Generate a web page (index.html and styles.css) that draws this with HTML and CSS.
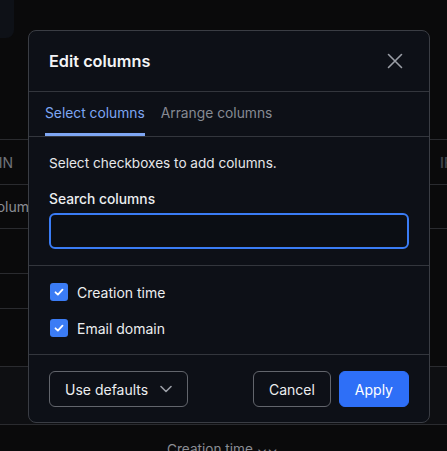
FILE: index.html
```html
<!DOCTYPE html>
<html>
<head>
<meta charset="utf-8">
<link rel="stylesheet" href="styles.css">
</head>
<body>
<div class="page">
  <div class="top"><div class="tab-stub"></div></div>
  <div class="row head-row">
    <span class="cell-l">IN</span>
    <span class="cell-r">IF</span>
  </div>
  <div class="row row2"><span class="cell-l">olum</span></div>
  <div class="row row3"></div>
  <div class="row row4"><div class="left-line"></div></div>
  <div class="row row5"><div class="left-line"></div></div>
  <div class="row row6"></div>
  <div class="row row7"><span class="cell-m">Creation time ⌄⌄</span></div>
</div>

<div class="modal">
  <div class="modal-header">
    <h2 class="title">Edit columns</h2>
    <svg class="close" width="16" height="16" viewBox="0 0 16 16"><path d="M1.5 1.5L14.5 14.5M14.5 1.5L1.5 14.5" stroke="#9a9ea6" stroke-width="1.6" stroke-linecap="round"/></svg>
  </div>
  <div class="tabs">
    <div class="tab active">Select columns</div>
    <div class="tab">Arrange columns</div>
  </div>
  <div class="modal-body">
    <p class="hint">Select checkboxes to add columns.</p>
    <label class="label">Search columns</label>
    <div class="input"></div>
  </div>
  <div class="checklist">
    <div class="check-row">
      <span class="checkbox"><svg width="12" height="12" viewBox="0 0 12 12"><path d="M2.5 6.3L4.9 8.6L9.5 3.6" fill="none" stroke="#fff" stroke-width="1.8" stroke-linecap="round" stroke-linejoin="round"/></svg></span>
      <span>Creation time</span>
    </div>
    <div class="check-row">
      <span class="checkbox"><svg width="12" height="12" viewBox="0 0 12 12"><path d="M2.5 6.3L4.9 8.6L9.5 3.6" fill="none" stroke="#fff" stroke-width="1.8" stroke-linecap="round" stroke-linejoin="round"/></svg></span>
      <span>Email domain</span>
    </div>
  </div>
  <div class="footer">
    <button class="btn btn-outline defaults">Use defaults
      <svg width="12" height="8" viewBox="0 0 12 8"><path d="M1 1.5L6 6.5L11 1.5" fill="none" stroke="#9a9ea6" stroke-width="1.6" stroke-linecap="round" stroke-linejoin="round"/></svg>
    </button>
    <div class="footer-right">
      <button class="btn btn-outline">Cancel</button>
      <button class="btn btn-primary">Apply</button>
    </div>
  </div>
</div>
</body>
</html>
```
FILE: styles.css
```css
* { box-sizing: border-box; }
html, body { margin: 0; padding: 0; }
body {
  width: 447px;
  height: 451px;
  overflow: hidden;
  background: #0a0a0b;
  font-family: Inter, "Noto Sans", sans-serif;
  color: #e8e9ec;
  position: relative;
}
.page { display: flex; flex-direction: column; }
.top { height: 139px; }
.tab-stub {
  width: 14px; height: 38px;
  background: #0e1117;
  border-radius: 0 0 8px 0;
}
.row {
  display: flex;
  align-items: center;
  justify-content: space-between;
  border-top: 1px solid #2a2b2f;
  font-size: 14px;
  color: #70737a;
}
.head-row { height: 45px; }
.row2 { height: 44px; color: #8a8d94; }
.row3 { height: 45px; }
.row4 { height: 35px; border-top: none; align-items: flex-start; }
.row5 { height: 58px; border-top: none; align-items: flex-start; }
.left-line { width: 29px; border-top: 1px solid #2a2b2f; }
.row6 { height: 58px; background: #0e0f12; }
.row7 { height: 27px; justify-content: center; align-items: flex-start; overflow: hidden; }
.cell-l { width: 29px; text-align: right; overflow: hidden; white-space: nowrap; direction: rtl; padding-right: 16px; }
.row2 .cell-l { padding-right: 0; width: 29px; }
.cell-r { width: 18px; overflow: hidden; white-space: nowrap; padding-left: 11px; color: #3f4249; font-weight: 600; }
.cell-m { color: #8a8d94; margin-top: 16px; margin-right: 2px; font-size: 13.6px; }

.modal {
  position: absolute;
  left: 28px;
  top: 30px;
  width: 402px;
  background: #0d1017;
  border: 1px solid #3a3d44;
  border-radius: 8px;
  display: flex;
  flex-direction: column;
}
.modal-header {
  display: flex;
  align-items: center;
  justify-content: space-between;
  padding: 20px 26px 20px 20px;
  border-bottom: 1px solid #33363d;
}
.title {
  margin: 0;
  font-size: 16.3px;
  line-height: 20px;
  font-weight: 600;
  color: #f3f4f6;
}
.close { display: block; }
.tabs {
  display: flex;
  gap: 16px;
  padding: 0 16px;
  border-bottom: 1px solid #33363d;
}
.tab {
  height: 44px;
  font-size: 13.8px;
  color: #868a93;
  border-bottom: 3px solid transparent;
  padding-top: 2px;
  line-height: 39px;
}
.tab.active { color: #7ea6f3; border-bottom-color: #7ea6f3; }
.modal-body {
  padding: 16px 20px;
  border-bottom: 1px solid #33363d;
  display: flex;
  flex-direction: column;
}
.hint { margin: 0 0 16px 0; font-size: 13.6px; line-height: 20px; color: #e6e7ea; }
.label { font-size: 13.8px; line-height: 20px; font-weight: 500; color: #eceef0; margin-bottom: 4px; }
.input {
  height: 36px;
  border: 2px solid #3a7cf5;
  border-radius: 6px;
  background: #0b0e14;
}
.checklist {
  padding: 16px 20px 16px 21px;
  border-bottom: 1px solid #33363d;
  display: flex;
  flex-direction: column;
  gap: 16px;
}
.check-row {
  display: flex;
  align-items: center;
  gap: 9px;
  height: 20px;
  font-size: 14px;
  color: #eceef0;
}
.checkbox {
  width: 18px; height: 18px;
  border-radius: 3px;
  background: #3b7cf5;
  display: flex;
  align-items: center;
  justify-content: center;
}
.checkbox svg { display: block; }
.footer {
  display: flex;
  justify-content: space-between;
  align-items: center;
  padding: 16px 20px 15px;
}
.footer-right { display: flex; gap: 8px; }
.btn {
  height: 36px;
  padding: 0 15px;
  border-radius: 6px;
  font-family: inherit;
  font-size: 14px;
  display: flex;
  align-items: center;
  justify-content: space-between;
  white-space: nowrap;
  cursor: pointer;
}
.btn-outline {
  background: transparent;
  border: 1px solid #62656c;
  color: #eceef0;
}
.btn-primary {
  background: #2e6ff7;
  border: 1px solid #2e6ff7;
  color: #ffffff;
}
.defaults { width: 139px; }
```
